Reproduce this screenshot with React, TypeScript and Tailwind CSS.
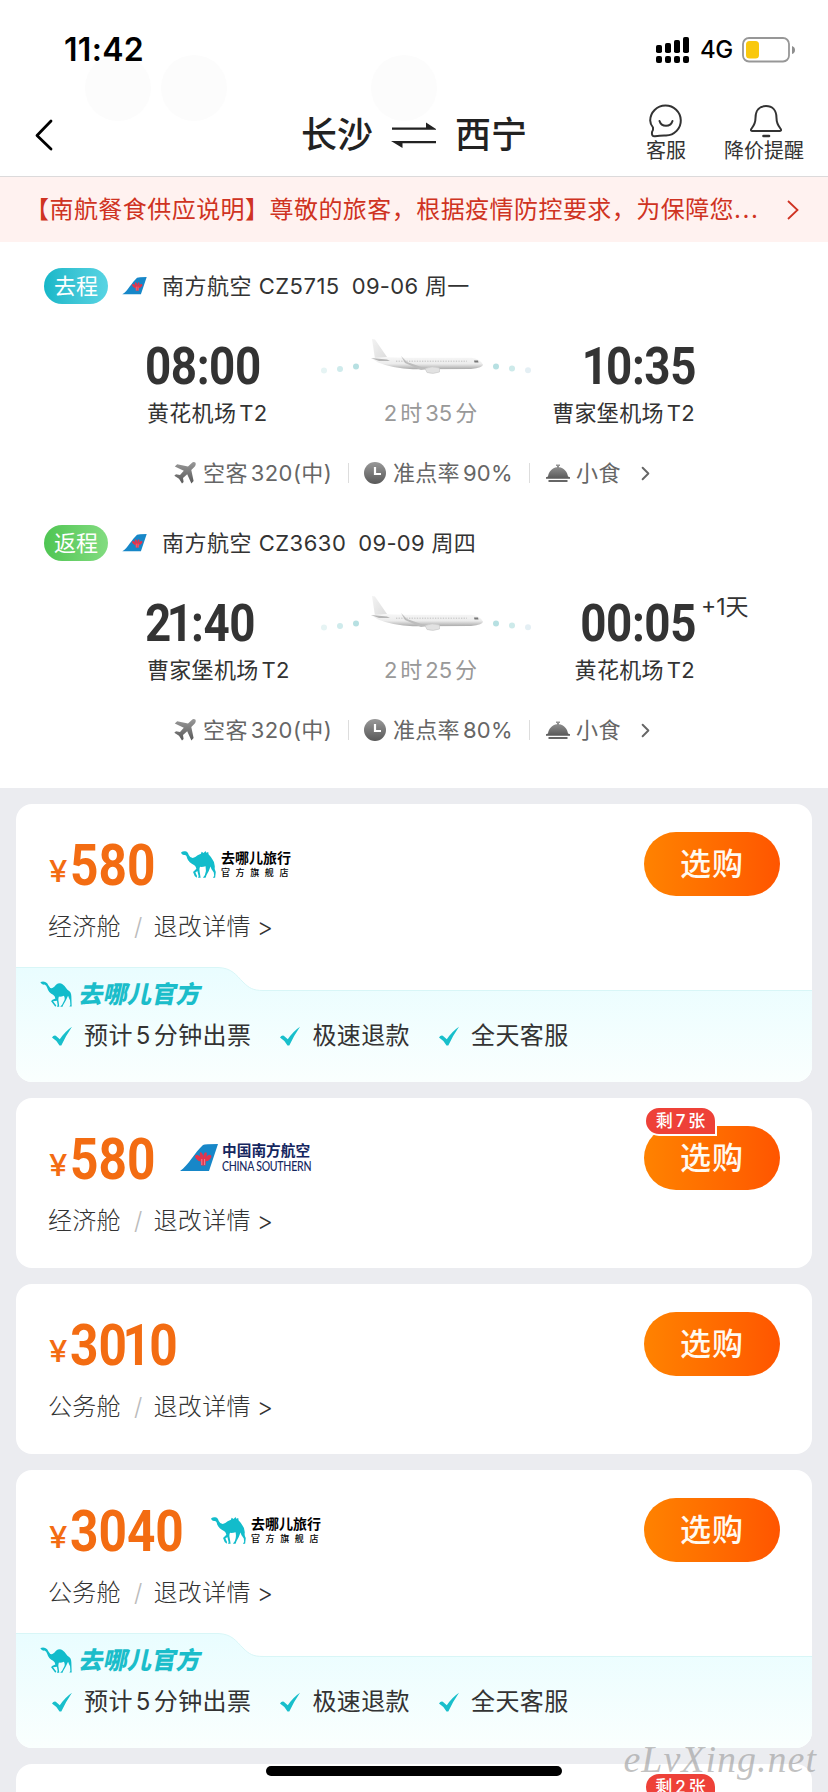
import { ChevronRight } from "lucide-react";

type Flight = {
	kind: "go" | "back";
	label: string;
	title: string;
	date: string;
	depart: string;
	from: string;
	duration: string;
	arrive: string;
	to: string;
	plusDay?: string;
	onTime: string;
};

type Offer = {
	price: string;
	cabin: string;
	seller?: "qunar" | "csair";
	left?: string;
	official?: boolean;
};

const flights: Flight[] = [
	{
		kind: "go",
		label: "去程",
		title: "南方航空 CZ5715",
		date: "09-06 周一",
		depart: "08:00",
		from: "黄花机场T2",
		duration: "2时35分",
		arrive: "10:35",
		to: "曹家堡机场T2",
		onTime: "准点率90%",
	},
	{
		kind: "back",
		label: "返程",
		title: "南方航空 CZ3630",
		date: "09-09 周四",
		depart: "21:40",
		from: "曹家堡机场T2",
		duration: "2时25分",
		arrive: "00:05",
		to: "黄花机场T2",
		plusDay: "+1天",
		onTime: "准点率80%",
	},
];

const offers: Offer[] = [
	{ price: "580", cabin: "经济舱", seller: "qunar", official: true },
	{ price: "580", cabin: "经济舱", seller: "csair", left: "剩7张" },
	{ price: "3010", cabin: "公务舱" },
	{ price: "3040", cabin: "公务舱", seller: "qunar", official: true },
	{ price: "", cabin: "", left: "剩2张" },
];

const perks = ["预计5分钟出票", "极速退款", "全天客服"];

/* Adds the small gap between Chinese characters and Latin letters or digits */
const Mixed = ({ text }: { text: string }) => {
	const parts = text.split(/([\dT%]+)/).filter(Boolean);
	return (
		<>
			{parts.map((part, i) => {
				if (!/^[\dT%]/.test(part)) return <span key={i}>{part}</span>;
				const next = parts[i + 1];
				const before = i > 0 ? "ml-[3px]" : "";
				const after = next && !next.startsWith("(") ? "mr-[3px]" : "";
				return (
					<span key={i} className={`${before} ${after}`}>
						{part}
					</span>
				);
			})}
		</>
	);
};

/* Big numerals, with the digit 1 set tighter than the others */
const Numerals = ({ value }: { value: string }) => (
	<>
		{value.split("").map((char, i) => (
			<span key={i} className={char === "1" ? "-ml-[0.09em] -mr-[0.035em]" : ""}>
				{char}
			</span>
		))}
	</>
);

const StatusBar = () => (
	<div className="flex h-[100px] shrink-0 items-center justify-between pl-[64px] pr-[32px]">
		<span className="text-[32px] font-semibold leading-none tracking-[0.300px] text-black">11:42</span>
		<div className="flex items-center">
			<svg width="34" height="26" viewBox="0 0 34 26" fill="#000">
				<rect x="0" y="8" width="6" height="8" rx="1.8" />
				<rect x="9" y="6" width="6" height="10" rx="1.8" />
				<rect x="18" y="3" width="6" height="13" rx="1.8" />
				<rect x="27" y="0" width="6" height="16" rx="1.8" />
				<rect x="0" y="19" width="6" height="7" rx="2" />
				<rect x="9" y="19" width="6" height="7" rx="2" />
				<rect x="18" y="19" width="6" height="7" rx="2" />
				<rect x="27" y="19" width="6" height="7" rx="2" />
			</svg>
			<span className="ml-[10px] w-[33px] text-[24px] font-medium leading-none tracking-[-0.5px] text-black">
				4G
			</span>
			<svg className="ml-[9px]" width="54" height="26" viewBox="0 0 54 26">
				<rect x="1" y="1" width="46" height="23.500" rx="6" fill="#fff" stroke="#979797" strokeWidth="1.800" />
				<rect x="4" y="4" width="13" height="17.500" rx="3.500" fill="#f9c80e" />
				<path d="M50 9 Q53 10 53 13 Q53 16 50 17 Z" fill="#8e8e8e" />
			</svg>
		</div>
	</div>
);

const Header = () => (
	<header className="flex h-[77px] shrink-0 justify-between border-b border-[#dcdadb] pl-[34px] pr-[24px]">
		<svg className="mt-[18px]" width="20" height="34" viewBox="0 0 20 34" fill="none" stroke="#000" strokeWidth="2.800" strokeLinecap="round" strokeLinejoin="round">
			<path d="M17 3 L3 17.500 L17 31" />
		</svg>
		<div className="ml-[247px] flex h-[70px] items-center text-[36px] font-medium leading-none text-[#222]">
			<span>长沙</span>
			<svg className="mx-[18px]" width="46" height="28" viewBox="0 0 46 28" fill="#222">
				<path d="M1 6.500 H35 L35 1.500 L45 8 V8.800 H1 Z" />
				<path d="M45 20 V22.200 H11.500 V27 L0 20 Z" />
			</svg>
			<span>西宁</span>
		</div>
		<div className="ml-auto flex gap-[38px] text-[20px] leading-none text-[#333]">
			<div className="flex flex-col items-center">
				<svg className="mt-[4px]" width="34" height="34" viewBox="0 0 34 34" fill="none" stroke="#333" strokeWidth="2" strokeLinecap="round" strokeLinejoin="round">
					<path d="M3 28 Q4.500 26 4 23.500 Q1.200 20 1.200 16.500 A15.300 15 0 1 1 17 31.500 Q12 31.300 6 32.200 Q2.300 32.500 3 28 Z" />
					<path d="M10.500 17 A6.800 6.800 0 0 0 23.500 17" />
				</svg>
				<span className="mt-[3px]">客服</span>
			</div>
			<div className="flex flex-col items-center">
				<svg className="ml-[4px] mt-[4px]" width="34" height="34" viewBox="0 0 34 34" fill="none" stroke="#333" strokeWidth="2" strokeLinecap="round" strokeLinejoin="round">
					<path d="M6.500 14 C6.500 6 11 2 17 2 C23 2 27.500 6 27.500 14 C27.500 20 29.500 22 31.800 25 Q32.600 27 31 27 H3 Q1.400 27 2.200 25 C4.500 22 6.500 20 6.500 14 Z" />
					<path d="M14.500 32 H20" strokeWidth="2.600" />
				</svg>
				<span className="mt-[3px]">降价提醒</span>
			</div>
		</div>
	</header>
);

const Notice = () => (
	<div className="flex h-[65px] shrink-0 items-center justify-between bg-[#fff2f0] pl-[25px] pr-[28px] text-[#cf3322]">
		<span className="whitespace-nowrap text-[24px] font-normal leading-none tracking-[0.450px]">
			【南航餐食供应说明】尊敬的旅客，根据疫情防控要求，为保障您<span className="tracking-[1.600px]">...</span>
		</span>
		<svg width="14" height="22" viewBox="0 0 14 22" fill="none" stroke="#cf3322" strokeWidth="1.800">
			<path d="M2 2 L11.500 11 L2 20" />
		</svg>
	</div>
);

const TailMark = ({ className }: { className: string }) => (
	<svg className={className} viewBox="0 0 38 28">
		<path d="M0 27 C8 22 15 8 23 1 Q25 0 38 0 L29 27 Z" fill="#1787c8" />
		<g fill="#e4344c">
			<ellipse cx="18.500" cy="14" rx="2.200" ry="4" transform="rotate(-48 18.500 14)" />
			<ellipse cx="21.500" cy="11.500" rx="1.500" ry="3.400" transform="rotate(-18 21.500 11.500)" />
			<ellipse cx="25" cy="11.500" rx="1.500" ry="3.400" transform="rotate(18 25 11.500)" />
			<ellipse cx="28" cy="14" rx="2.200" ry="4" transform="rotate(48 28 14)" />
			<path d="M20.500 14 H26 L25.500 21.500 H21 Z" />
		</g>
		<path d="M21.800 15 V21 M24.600 15 V21" stroke="#f7b5bf" strokeWidth="0.600" />
	</svg>
);

const Plane = () => (
	<svg width="210" height="42" viewBox="0 0 210 42">
		<defs>
			<linearGradient id="hull" x1="0" y1="0" x2="0" y2="1">
				<stop offset="0" stopColor="#f6f6f6" />
				<stop offset="0.550" stopColor="#ececec" />
				<stop offset="1" stopColor="#a9a9a9" />
			</linearGradient>
			<linearGradient id="fin" x1="0" y1="0" x2="1" y2="1">
				<stop offset="0" stopColor="#f3f3f3" />
				<stop offset="1" stopColor="#dcdcdc" />
			</linearGradient>
		</defs>
		<circle cx="3" cy="36.500" r="3" fill="#e6f4f4" />
		<circle cx="19" cy="35" r="3" fill="#cfebec" />
		<circle cx="35" cy="32.500" r="3" fill="#b7e0e2" />
		<path d="M51 5 L54 5.500 L66 23 L54 25 Z" fill="url(#fin)" />
		<path d="M50 24 Q64 22.500 84 23.800 H150 Q159 25 162 30.500 Q162 33.500 150 35 L92 35.300 Q72 34.500 57 28.500 Z" fill="url(#hull)" />
		<path d="M50 24 L66 25.500 L69 27 L58 27 Z" fill="#b5b5b5" />
		<path d="M80 22 L86 28 L106 35 L100 36 L84 29 Z" fill="#bdbdbd" />
		<path d="M104 34.500 Q111 31.500 118.500 34 V38 Q112 40.500 106 38.500 Z" fill="#e2e2e2" stroke="#c4c4c4" strokeWidth="0.600" />
		<path d="M75 27.200 H146" stroke="#bcbcbc" strokeWidth="0.900" strokeDasharray="1.300 1.300" />
		<path d="M153 26.500 H157 L157.500 28.500 H153.500 Z" fill="#777" />
		<circle cx="175" cy="32.500" r="3" fill="#b7e0e2" />
		<circle cx="191" cy="34.500" r="3" fill="#cdeaea" />
		<circle cx="207" cy="36.300" r="3" fill="#e4eff4" />
	</svg>
);

const IconFade = ({ id }: { id: string }) => (
	<defs>
		<linearGradient id={id} x1="0" y1="0" x2="0" y2="1">
			<stop offset="0" stopColor="#999" />
			<stop offset="1" stopColor="#585858" />
		</linearGradient>
	</defs>
);

const MetaRow = ({ onTime }: { onTime: string }) => (
	<div className="mt-[32px] flex h-[30px] items-center pl-[174px] text-[22px] leading-none text-[#666]">
		<svg width="22" height="22" viewBox="0 0 22 22">
			<IconFade id="fade-plane" />
			<path
				fill="url(#fade-plane)"
				d="M21.300 0.600 Q19.500 -0.600 17.500 1.200 L14 4.600 L3.200 2.200 L0.800 4.400 L9.800 8.800 L6 13 L2 12.300 L0.300 13.800 L5 16.800 L8 21.600 L9.600 20 L9 16 L13.200 12.200 L17.400 21.400 L19.600 19 L17.300 8 L20.800 4.500 Q22.400 2.200 21.300 0.600 Z"
			/>
		</svg>
		<span className="ml-[7px] w-[127px] whitespace-nowrap tracking-[0.400px]">
			<Mixed text="空客320(中)" />
		</span>
		<i className="ml-[18px] h-5 w-px bg-[#ddd]" />
		<svg className="ml-[15px]" width="22" height="22" viewBox="0 0 22 22">
			<IconFade id="fade-clock" />
			<circle cx="11" cy="11" r="11" fill="url(#fade-clock)" />
			<path d="M11 5 V12 H17" fill="none" stroke="#fff" strokeWidth="2.200" />
		</svg>
		<span className="ml-[7px] w-[118px] whitespace-nowrap tracking-[0.300px]">
			<Mixed text={onTime} />
		</span>
		<i className="ml-[18px] h-5 w-px bg-[#ddd]" />
		<svg className="ml-[16px]" width="24" height="19" viewBox="0 0 24 19">
			<IconFade id="fade-meal" />
			<path fill="url(#fade-meal)" d="M10 0.500 H14 V2 H13 V3.200 C18 3.700 21.500 8 22 12.500 L24 13.200 V14.800 H0 V13.200 L2 12.500 C2.500 8 6 3.700 11 3.200 V2 H10 Z" />
			<path d="M2.500 17 H21.500" stroke="#666" strokeWidth="2" />
		</svg>
		<span className="ml-[6px] tracking-[0.400px]">小食</span>
		<ChevronRight className="ml-[13px]" size={23} strokeWidth={2} />
	</div>
);

const FlightLeg = ({ flight }: { flight: Flight }) => (
	<section className="h-[257px] pt-[26px]">
		<div className="flex h-9 items-center pl-[44px] text-[22px] leading-none text-[#333]">
			<span
				className={`flex h-9 w-16 items-center justify-center rounded-full text-[22px] text-white ${
					flight.kind === "go"
						? "bg-gradient-to-r from-[#14b7c8] to-[#57d4e3]"
						: "bg-gradient-to-r from-[#4ec552] to-[#82dc80]"
				}`}
			>
				{flight.label}
			</span>
			<TailMark className="ml-[14px] h-[18px] w-[25px]" />
			<span className="ml-[15px] tracking-[0.500px]">{flight.title}</span>
			<span className="ml-[12px] tracking-[0.300px]">{flight.date}</span>
		</div>
		<div className="mt-[28px] flex pl-[147px] text-[#333]">
			<div className="w-[174px]">
				<div className="-ml-[2px] h-[68px] origin-left scale-x-[0.88] whitespace-nowrap font-['Roboto',sans-serif] text-[52px] font-bold leading-[70px] tracking-[-0.500px]">
					<Numerals value={flight.depart} />
				</div>
				<div className="h-[26px] whitespace-nowrap text-[22px] leading-[26px] tracking-[0.300px]">
					<Mixed text={flight.from} />
				</div>
			</div>
			<div className="flex w-[210px] flex-col items-center">
				<div className="h-[68px] pt-[2px]">
					<Plane />
				</div>
				<div className="h-[26px] pl-[9px] text-[22px] leading-[26px] text-[#999]">
					<Mixed text={flight.duration} />
				</div>
			</div>
			<div className="relative w-[164px]">
				<div className="-mr-px flex h-[68px] origin-right scale-x-[0.88] justify-end whitespace-nowrap font-['Roboto',sans-serif] text-[52px] font-bold leading-[70px] tracking-[-0.500px]">
					<Numerals value={flight.arrive} />
				</div>
				<div className="flex h-[26px] justify-end whitespace-nowrap text-[22px] leading-[26px] tracking-[0.300px]">
					<Mixed text={flight.to} />
				</div>
				{flight.plusDay && (
					<span className="absolute left-full top-px ml-[6px] whitespace-nowrap text-[23px] leading-[34px]">
						{flight.plusDay}
					</span>
				)}
			</div>
		</div>
		<MetaRow onTime={flight.onTime} />
	</section>
);

const Camel = ({ className }: { className: string }) => (
	<svg className={className} viewBox="0 0 108 82" fill="#12bccb">
		<path d="M2 5 Q8 0 15 1 Q23 2 26 12 Q30 21 38 21 Q46 20 53 13 L63 8 L65 2 L71 6 L77 0 L79 5 L85 3 L86 10 Q92 16 98 26 Q105 34 105 46 Q103 56 108 64 L106 81 H99 L103 76 L102 65 Q93 55 92 47 Q88 60 80 73 L77 81 H69 L75 73 Q80 60 77 46 Q68 49 60 48 Q57 55 59 63 L62 81 H54 L56 77 L52 61 L46 65 L51 76 L50 81 L44 76 L39 64 L49 54 Q48 46 43 43 Q26 36 21 22 Q19 12 14 12 Q7 14 2 5 Z" />
	</svg>
);

const SingleHumpCamel = ({ className }: { className: string }) => (
	<svg className={className} viewBox="0 0 98 78" fill="#12bccb">
		<path d="M1 3 Q8 -1 16 2 Q23 4 26 13 Q31 23 38 21 Q44 18 49 11 Q59 3 69 9 Q77 14 84 26 Q96 32 96 46 L97 77 H90 L93 73 L92 58 Q88 50 86 44 Q82 52 79 59 L71 73 L69 78 H62 L68 71 L75 57 Q77 50 73 44 Q65 48 58 47 Q55 55 57 62 L59 78 H52 L54 73 L52 60 L40 61 L50 74 L47 78 L34 61 L37 57 L47 53 Q46 44 40 41 Q26 35 22 20 Q20 12 14 10 Q6 12 1 3 Z" />
	</svg>
);

const QunarLogo = () => (
	<div className="flex items-center">
		<Camel className="h-[27px] w-[36px]" />
		<div className="ml-[5px] whitespace-nowrap leading-none text-black">
			<div className="text-[14px] font-bold leading-[15px]">去哪儿旅行</div>
			<div className="mt-[2px] text-[9px] font-medium leading-[12px] tracking-[5.600px]">官方旗舰店</div>
		</div>
	</div>
);

const ChinaSouthernLogo = () => (
	<div className="flex items-center">
		<TailMark className="h-[28px] w-[38px]" />
		<div className="ml-[4px] whitespace-nowrap text-[#14265f]">
			<div className="text-[14.700px] font-bold leading-[15px]">中国南方航空</div>
			<div className="w-[88px] origin-left scale-x-[0.810] font-['Lato',sans-serif] text-[13px] font-medium leading-[14px] tracking-[-0.300px]">
				CHINA SOUTHERN
			</div>
		</div>
	</div>
);

const OfficialPanel = () => (
	<div className="relative mt-[25px] h-[115px] pt-[12px]">
		<svg className="absolute inset-0" width="796" height="115" viewBox="0 0 796 115">
			<defs>
				<linearGradient id="mint" x1="0" y1="0" x2="0" y2="1">
					<stop offset="0" stopColor="#e9fdff" />
					<stop offset="1" stopColor="#fafffe" />
				</linearGradient>
			</defs>
			<path d="M0 0.500 H202 C216 1 220 8 227 15 C233 21 237 23.500 247 23.500 H796 V115 H0 Z" fill="url(#mint)" />
			<path d="M0 0.500 H202 C216 1 220 8 227 15 C233 21 237 23.500 247 23.500 H796" fill="none" stroke="#d8f6f7" />
		</svg>
		<div className="relative flex h-[30px] items-center pl-[24px]">
			<SingleHumpCamel className="h-[26px] w-[32px]" />
			<span className="ml-[8px] -skew-x-12 text-[24.300px] font-black leading-none text-[#1bbdca]">
				去哪儿官方
			</span>
		</div>
		<div className="relative mt-[12px] flex h-[30px] items-center gap-[29px] pl-[36px] text-[24px] leading-none tracking-[0.400px] text-[#333]">
			{perks.map((perk) => (
				<div key={perk} className="flex items-center gap-[12px]">
					<svg width="20" height="20" viewBox="0 0 20 20" fill="#18bfcb">
						<path d="M0 11.500 Q1.500 9 3.800 9.700 L7.800 13.300 Q13 5.500 20 0.800 Q14 9.500 9.300 19.500 L7.500 19.500 Q5 14.500 0 11.500 Z" />
					</svg>
					<span className="whitespace-nowrap">
						<Mixed text={perk} />
					</span>
				</div>
			))}
		</div>
	</div>
);

const OfferCard = ({ offer }: { offer: Offer }) => (
	<article className={`overflow-hidden rounded-2xl bg-white ${offer.official ? "h-[278px]" : "h-[170px]"} shrink-0`}>
		<div className="flex h-[92px] items-center pl-[33px] pr-[32px] pt-[28px]">
			{offer.price && (
				<div className="mt-[4px] flex items-baseline text-[#f36c12]">
					<span className="w-[21px] origin-bottom-left -translate-y-[3px] scale-x-[1.1] text-[30px] font-medium leading-none">
						¥
					</span>
					<span className="font-['Roboto',sans-serif] text-[57px] font-bold leading-[64px]">
						<span className={`block origin-left scale-x-[0.870] whitespace-nowrap ${offer.price.length > 3 ? "w-[113px]" : "w-[83px]"}`}>
							<Numerals value={offer.price} />
						</span>
					</span>
				</div>
			)}
			<div className="ml-[27px]">
				{offer.seller === "qunar" && <QunarLogo />}
				{offer.seller === "csair" && <ChinaSouthernLogo />}
			</div>
			<div className="relative ml-auto">
				<button className="block h-16 w-[136px] rounded-full bg-gradient-to-r from-[#ff8200] to-[#ff5500] pb-[2px] text-[31px] font-medium leading-none tracking-[1px] text-[#fffaf0]">
					选购
				</button>
				{offer.left && (
					<span className="absolute -top-5 left-0 flex h-[30px] w-[73px] items-center justify-center rounded-[15px] rounded-br-none border-2 border-white bg-[#ee4138] text-[17px] font-medium leading-none text-white">
						<Mixed text={offer.left} />
					</span>
				)}
			</div>
		</div>
		{offer.cabin && (
			<div className="mt-[16px] flex h-[30px] items-center pl-[32px] text-[24px] font-light leading-none tracking-[0.300px] text-[#333]">
				<span>{offer.cabin}</span>
				<span className="ml-[13px] text-[#bbb]">/</span>
				<span className="ml-[11px]">退改详情</span>
				<span className="ml-[6px] text-[25px]">&gt;</span>
			</div>
		)}
		{offer.official && <OfficialPanel />}
	</article>
);

export default function App() {
	return (
		<div className="relative h-[1792px] w-[828px] overflow-hidden bg-white font-['Inter','Noto_Sans_CJK_SC',sans-serif]">
			{/* Faint cloud dots behind the header */}
			<div className="absolute left-[85px] top-[55px] size-[66px] rounded-full bg-[#fcfcfc]" />
			<div className="absolute left-[161px] top-[55px] size-[66px] rounded-full bg-[#fcfcfc]" />
			<div className="absolute left-[371px] top-[55px] size-[66px] rounded-full bg-[#fcfcfc]" />

			<div className="relative flex h-full flex-col">
				<StatusBar />
				<Header />
				<Notice />
				<div className="h-[546px] shrink-0">
					{flights.map((flight) => (
						<FlightLeg key={flight.title} flight={flight} />
					))}
				</div>
				<main className="flex min-h-0 grow flex-col gap-4 overflow-hidden bg-[#ebecf0] px-4 pt-4">
					{offers.map((offer, i) => (
						<OfferCard key={i} offer={offer} />
					))}
				</main>
			</div>

			<div className="absolute bottom-[16px] left-[266px] h-[10px] w-[296px] rounded-full bg-black" />
			<div className="absolute bottom-[14px] right-[11px] font-['Liberation_Serif',serif] text-[38px] italic leading-none tracking-[1px] text-[#999]/60">
				eLvXing.net
			</div>
		</div>
	);
}
